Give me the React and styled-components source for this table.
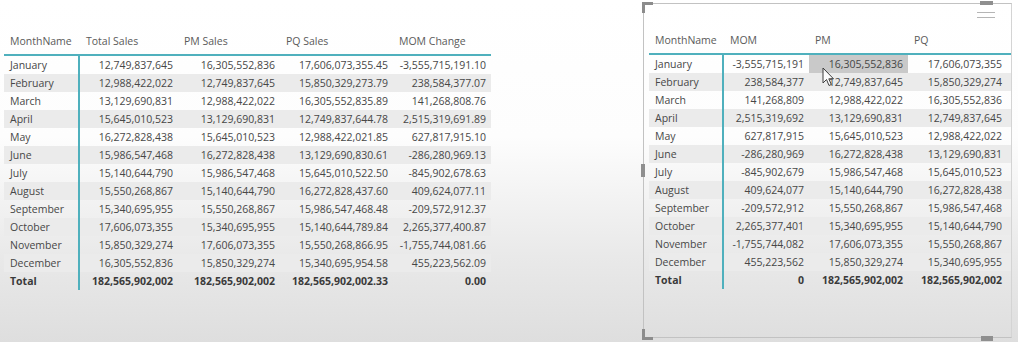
import React from 'react'
import styled, { createGlobalStyle, css } from 'styled-components'

const teal = '#4fb0bd'

const GlobalStyle = createGlobalStyle`
  html, body {
    margin: 0;
    padding: 0;
  }
  body {
    width: 1018px;
    height: 342px;
    overflow: hidden;
    font-family: "Open Sans", "Noto Sans", sans-serif;
    background: linear-gradient(to bottom, #ffffff 0%, #fdfdfd 40%, #e9e9e9 75%, #dedede 100%);
  }
`

const Page = styled.div`
  display: flex;
  align-items: flex-start;
  justify-content: space-between;
  height: 342px;
  box-sizing: border-box;
  padding: 3px 6px 0 4px;
`

const LeftArea = styled.div`
  padding-top: 25px;
`

const Panel = styled.div`
  position: relative;
  width: 369px;
  height: 335px;
  box-sizing: border-box;
  border: 1.5px solid #c2c2c2;
  border-right-color: #d4d4d4;
  padding: 23px 0 0 5px;
`

const Table = styled.div`
  display: flex;
  flex-direction: column;
  font-size: 10.5px;
  color: #474747;
`

const Row = styled.div`
  display: grid;
  grid-template-columns: ${p => p.$cols};
  height: 18px;
  align-items: stretch;
  background: ${p => (p.$band ? '#ebebeb' : 'transparent')};
  ${p => p.$total && css`
    font-weight: 700;
    color: #3a3a3a;
  `}
`

const HeaderRow = styled.div`
  display: grid;
  grid-template-columns: ${p => p.$cols};
  height: 28px;
  box-sizing: border-box;
  border-bottom: 2px solid ${teal};
  color: #5a5a5a;
`

const HeadCell = styled.div`
  display: flex;
  align-items: flex-end;
  padding: 0 0 6px 6px;
  white-space: nowrap;
`

const Cell = styled.div`
  display: flex;
  align-items: center;
  white-space: nowrap;
  ${p => p.$label
    ? css`
      padding-left: 6px;
      border-right: 2px solid ${teal};
    `
    : css`
      justify-content: flex-end;
      padding-right: 5px;
    `}
  ${p => p.$selected && css`
    background: #c9c9c9;
  `}
`

const Corner = styled.div`
  position: absolute;
  left: -2px;
  width: 8px;
  height: 8px;
  border-left: 3px solid #8c8c8c;
  ${p => (p.$bottom
    ? css`bottom: -3px; border-bottom: 3px solid #8c8c8c;`
    : css`top: -2px; border-top: 3px solid #8c8c8c;`)}
`

const Handle = styled.div`
  position: absolute;
  background: #8f8f8f;
  ${p => p.$side === 'left' && css`left: -3px; top: 160px; width: 4px; height: 13px;`}
  ${p => p.$side === 'top' && css`left: 336px; top: -3px; width: 13px; height: 4px;`}
  ${p => p.$side === 'bottom' && css`left: 337px; bottom: -4px; width: 12px; height: 5px;`}
`

const Grip = styled.div`
  position: absolute;
  left: 333px;
  top: 8px;
  width: 18px;
  height: 4px;
  border-top: 1px solid #b5b5b5;
  border-bottom: 1px solid #b5b5b5;
`

const Cursor = styled.svg`
  position: absolute;
  left: 178px;
  top: 63px;
  opacity: 0.85;
`

const leftCols = '76px 98px 102px 113px 98px'
const rightCols = '75px 85px 99px 99px'

const leftHead = ['MonthName', 'Total Sales', 'PM Sales', 'PQ Sales', 'MOM Change']
const leftRows = [
  ['January', '12,749,837,645', '16,305,552,836', '17,606,073,355.45', '-3,555,715,191.10'],
  ['February', '12,988,422,022', '12,749,837,645', '15,850,329,273.79', '238,584,377.07'],
  ['March', '13,129,690,831', '12,988,422,022', '16,305,552,835.89', '141,268,808.76'],
  ['April', '15,645,010,523', '13,129,690,831', '12,749,837,644.78', '2,515,319,691.89'],
  ['May', '16,272,828,438', '15,645,010,523', '12,988,422,021.85', '627,817,915.10'],
  ['June', '15,986,547,468', '16,272,828,438', '13,129,690,830.61', '-286,280,969.13'],
  ['July', '15,140,644,790', '15,986,547,468', '15,645,010,522.50', '-845,902,678.63'],
  ['August', '15,550,268,867', '15,140,644,790', '16,272,828,437.60', '409,624,077.11'],
  ['September', '15,340,695,955', '15,550,268,867', '15,986,547,468.48', '-209,572,912.37'],
  ['October', '17,606,073,355', '15,340,695,955', '15,140,644,789.84', '2,265,377,400.87'],
  ['November', '15,850,329,274', '17,606,073,355', '15,550,268,866.95', '-1,755,744,081.66'],
  ['December', '16,305,552,836', '15,850,329,274', '15,340,695,954.58', '455,223,562.09']
]
const leftTotal = ['Total', '182,565,902,002', '182,565,902,002', '182,565,902,002.33', '0.00']

const rightHead = ['MonthName', 'MOM', 'PM', 'PQ']
const rightRows = [
  ['January', '-3,555,715,191', '16,305,552,836', '17,606,073,355'],
  ['February', '238,584,377', '12,749,837,645', '15,850,329,274'],
  ['March', '141,268,809', '12,988,422,022', '16,305,552,836'],
  ['April', '2,515,319,692', '13,129,690,831', '12,749,837,645'],
  ['May', '627,817,915', '15,645,010,523', '12,988,422,022'],
  ['June', '-286,280,969', '16,272,828,438', '13,129,690,831'],
  ['July', '-845,902,679', '15,986,547,468', '15,645,010,523'],
  ['August', '409,624,077', '15,140,644,790', '16,272,828,438'],
  ['September', '-209,572,912', '15,550,268,867', '15,986,547,468'],
  ['October', '2,265,377,401', '15,340,695,955', '15,140,644,790'],
  ['November', '-1,755,744,082', '17,606,073,355', '15,550,268,867'],
  ['December', '455,223,562', '15,850,329,274', '15,340,695,955']
]
const rightTotal = ['Total', '0', '182,565,902,002', '182,565,902,002']

const Matrix = ({ cols, head, rows, total, selected }) => (
  <Table>
    <HeaderRow $cols={cols}>
      {head.map(h => <HeadCell key={h}>{h}</HeadCell>)}
    </HeaderRow>
    {rows.map((r, i) => (
      <Row key={r[0]} $cols={cols} $band={i % 2 === 1}>
        {r.map((v, j) => (
          <Cell
            key={j}
            $label={j === 0}
            $selected={selected && selected[0] === i && selected[1] === j}
          >
            {v}
          </Cell>
        ))}
      </Row>
    ))}
    <Row $cols={cols} $total>
      {total.map((v, j) => <Cell key={j} $label={j === 0}>{v}</Cell>)}
    </Row>
  </Table>
)

const App = () => (
  <>
    <GlobalStyle />
    <Page>
      <LeftArea>
        <Matrix cols={leftCols} head={leftHead} rows={leftRows} total={leftTotal} />
      </LeftArea>
      <Panel>
        <Corner />
        <Corner $bottom />
        <Handle $side='left' />
        <Handle $side='top' />
        <Handle $side='bottom' />
        <Grip />
        <Matrix
          cols={rightCols}
          head={rightHead}
          rows={rightRows}
          total={rightTotal}
          selected={[0, 2]}
        />
        <Cursor width='13' height='20' viewBox='0 0 13 20'>
          <path
            d='M1 1 L1 16 L4.5 12.5 L7 18.5 L9.3 17.5 L6.8 11.8 L11.5 11.8 Z'
            fill='#fff'
            stroke='#222'
            strokeWidth='1'
            strokeLinejoin='round'
          />
        </Cursor>
      </Panel>
    </Page>
  </>
)

export default App
